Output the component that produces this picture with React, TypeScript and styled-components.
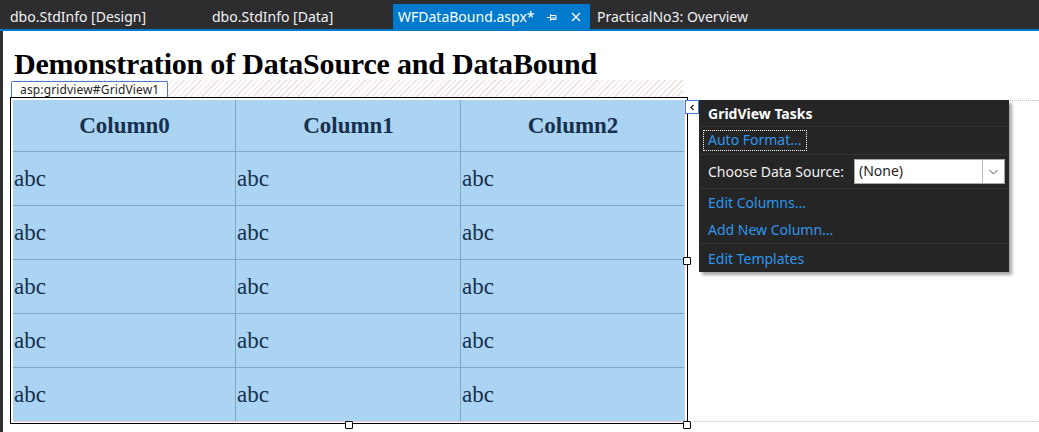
import styled, { createGlobalStyle } from "styled-components";

const GlobalStyle = createGlobalStyle`
  html, body {
    margin: 0;
    padding: 0;
    background: #ffffff;
    overflow: hidden;
  }
`;

const Page = styled.div`
  width: 1039px;
  height: 432px;
  display: flex;
  flex-direction: column;
  font-family: "Noto Sans", "Open Sans", sans-serif;
`;

const TabBar = styled.div`
  height: 29px;
  background: #2d2d30;
  border-bottom: 2px solid #007acc;
  display: flex;
  align-items: flex-end;
`;

const Tab = styled.div<{ $width: number; $pad: number; $active?: boolean }>`
  width: ${(p) => p.$width}px;
  height: 25px;
  box-sizing: border-box;
  padding-left: ${(p) => p.$pad}px;
  display: flex;
  align-items: center;
  background: ${(p) => (p.$active ? "#007acc" : "transparent")};
  color: ${(p) => (p.$active ? "#ffffff" : "#f1f1f1")};
  font-size: 14px;
  white-space: nowrap;
`;

const TabTitle = styled.span`
  flex: 1;
  line-height: 25px;
  padding-bottom: 1px;
`;

const TabIcon = styled.span<{ $right: number }>`
  display: flex;
  align-items: center;
  margin-right: ${(p) => p.$right}px;
`;

const Surface = styled.div`
  flex: 1;
  position: relative;
  border-left: 3px solid #2d2d30;
  padding: 15px 0 0 7px;
`;

const Heading = styled.h1`
  margin: 0 0 0 4px;
  height: 34px;
  font-family: "Liberation Serif", "Times New Roman", serif;
  font-size: 30px;
  letter-spacing: -0.2px;
  line-height: 36px;
  font-weight: bold;
  color: #000;
  white-space: nowrap;
`;

const ControlBlock = styled.div`
  position: relative;
  width: 678px;
`;

const TagStrip = styled.div`
  margin-left: 1px;
  width: 672px;
  height: 17px;
  display: flex;
  align-items: flex-end;
  background: repeating-linear-gradient(
    -45deg,
    #f2dcdc 0px,
    #f2dcdc 1px,
    #ffffff 1px,
    #ffffff 4px
  );
`;

const TagLabel = styled.div`
  height: 16px;
  box-sizing: border-box;
  padding: 0 8px;
  background: #ffffff;
  border: 1px solid #4a78c8;
  border-bottom: none;
  border-radius: 2px 2px 0 0;
  font-size: 12px;
  letter-spacing: 0.15px;
  line-height: 15px;
  color: #1e1e1e;
`;

const SelectionFrame = styled.div`
  position: relative;
  border: 1px solid #000;
  padding: 2px;
  width: 678px;
  box-sizing: border-box;
`;

const Grid = styled.table`
  width: 671px;
  border-collapse: collapse;
  background: #abd3f2;
  font-family: "Liberation Serif", "Times New Roman", serif;
  color: #16304f;
  box-shadow: 1px 1px 0 #e8c8c8;

  td,
  th {
    padding: 0 0 0 1px;
    border: 1px solid #7ea6c8;
  }
  tr:first-child th {
    border-top: none;
  }
  tr:last-child td {
    border-bottom: none;
  }
  th:first-child,
  td:first-child {
    border-left: none;
  }
  th:last-child,
  td:last-child {
    border-right: none;
  }
`;

const HeadCell = styled.th`
  height: 51px;
  font-size: 23px;
  font-weight: bold;
  text-align: center;
`;

const Cell = styled.td`
  height: 53px;
  font-size: 23px;
  text-align: left;
  vertical-align: middle;
`;

const Handle = styled.div<{ $x: number; $y: number }>`
  position: absolute;
  left: ${(p) => p.$x}px;
  top: ${(p) => p.$y}px;
  width: 6px;
  height: 6px;
  background: #fff;
  border: 1px solid #000;
  border-radius: 1px;
`;

const SmartTag = styled.div`
  position: absolute;
  left: 674px;
  top: 2px;
  width: 14px;
  height: 14px;
  box-sizing: border-box;
  background: #fff;
  border: 1px solid #3c7fd6;
  display: flex;
  align-items: center;
  justify-content: center;
`;

const Guide = styled.div<{ $x: number; $y: number; $w: number }>`
  position: absolute;
  left: ${(p) => p.$x}px;
  top: ${(p) => p.$y}px;
  width: ${(p) => p.$w}px;
  border-top: 1px dotted #c4c4c4;
`;

const Tasks = styled.div`
  position: absolute;
  left: 689px;
  top: 20px;
  width: 310px;
  background: #252526;
  box-shadow: 3px 3px 3px rgba(0, 0, 0, 0.35);
  color: #f1f1f1;
  font-size: 14px;
  display: flex;
  flex-direction: column;
`;

const TaskRow = styled.div<{ $h: number; $sep?: boolean }>`
  height: ${(p) => p.$h}px;
  box-sizing: border-box;
  padding-left: 9px;
  display: flex;
  align-items: center;
  border-bottom: ${(p) => (p.$sep ? "1px solid #333337" : "none")};
  white-space: nowrap;
`;

const TaskTitle = styled.span`
  font-weight: bold;
  color: #ffffff;
`;

const TaskLink = styled.span<{ $focus?: boolean }>`
  color: #2f96ec;
  ${(p) =>
    p.$focus
      ? `outline: 1px dotted #ffffff; outline-offset: 0; margin-left: -4px; padding: 0 4px 1px 4px; line-height: 18px;`
      : ""}
`;

const Label = styled.span`
  width: 146px;
`;

const Select = styled.div`
  width: 151px;
  height: 25px;
  box-sizing: border-box;
  background: #ffffff;
  border: 1px solid #a8a8a8;
  display: flex;
  align-items: stretch;
  color: #1e1e1e;
`;

const SelectValue = styled.span`
  flex: 1;
  padding-left: 4px;
  line-height: 22px;
`;

const SelectButton = styled.span`
  width: 21px;
  border-left: 1px solid #b8b8b8;
  display: flex;
  align-items: center;
  justify-content: center;
`;

const rows = [0, 1, 2, 3, 4];

export default function App() {
  return (
    <>
      <GlobalStyle />
      <Page>
        <TabBar>
          <Tab $width={201} $pad={10}>
            <TabTitle>dbo.StdInfo [Design]</TabTitle>
          </Tab>
          <Tab $width={192} $pad={11}>
            <TabTitle>dbo.StdInfo [Data]</TabTitle>
          </Tab>
          <Tab $width={197} $pad={5} $active>
            <TabTitle>WFDataBound.aspx*</TabTitle>
            <TabIcon $right={14}>
              <svg width="10" height="10" viewBox="0 0 10 10">
                <path
                  d="M0 5.5H3.5M3.5 2V9M3.5 3.5H9V7.5H3.5M3.5 6H9"
                  stroke="#fff"
                  strokeWidth="1"
                  fill="none"
                />
              </svg>
            </TabIcon>
            <TabIcon $right={9}>
              <svg width="10" height="10" viewBox="0 0 10 10">
                <path d="M1 1L9 9M9 1L1 9" stroke="#fff" strokeWidth="1.4" />
              </svg>
            </TabIcon>
          </Tab>
          <Tab $width={220} $pad={7}>
            <TabTitle>PracticalNo3: Overview</TabTitle>
          </Tab>
        </TabBar>
        <Surface>
          <Guide $x={695} $y={69} $w={341} />
          <Guide $x={691} $y={390} $w={345} />
          <Heading>Demonstration of DataSource and DataBound</Heading>
          <ControlBlock>
            <TagStrip>
              <TagLabel>asp:gridview#GridView1</TagLabel>
            </TagStrip>
            <SelectionFrame>
              <Grid>
                <tbody>
                  <tr>
                    <HeadCell>Column0</HeadCell>
                    <HeadCell>Column1</HeadCell>
                    <HeadCell>Column2</HeadCell>
                  </tr>
                  {rows.map((r) => (
                    <tr key={r}>
                      <Cell style={{ width: 221 }}>abc</Cell>
                      <Cell style={{ width: 223 }}>abc</Cell>
                      <Cell>abc</Cell>
                    </tr>
                  ))}
                </tbody>
              </Grid>
              <Handle $x={672} $y={159} />
              <Handle $x={334} $y={323} />
              <Handle $x={672} $y={323} />
              <SmartTag>
                <svg width="7" height="7" viewBox="0 0 7 7">
                  <path d="M4.5 1L2 3.5L4.5 6" stroke="#1e1e1e" strokeWidth="1.2" fill="none" />
                </svg>
              </SmartTag>
            </SelectionFrame>
            <Tasks>
              <TaskRow $h={27} $sep>
                <TaskTitle>GridView Tasks</TaskTitle>
              </TaskRow>
              <TaskRow $h={28} $sep>
                <TaskLink $focus>Auto Format...</TaskLink>
              </TaskRow>
              <TaskRow $h={34} $sep>
                <Label>Choose Data Source:</Label>
                <Select>
                  <SelectValue>(None)</SelectValue>
                  <SelectButton>
                    <svg width="9" height="6" viewBox="0 0 9 6">
                      <path d="M0.5 1L4.5 5L8.5 1" stroke="#555" strokeWidth="1" fill="none" />
                    </svg>
                  </SelectButton>
                </Select>
              </TaskRow>
              <TaskRow $h={27}>
                <TaskLink>Edit Columns...</TaskLink>
              </TaskRow>
              <TaskRow $h={28} $sep>
                <TaskLink>Add New Column...</TaskLink>
              </TaskRow>
              <TaskRow $h={28}>
                <TaskLink>Edit Templates</TaskLink>
              </TaskRow>
            </Tasks>
          </ControlBlock>
        </Surface>
      </Page>
    </>
  );
}
